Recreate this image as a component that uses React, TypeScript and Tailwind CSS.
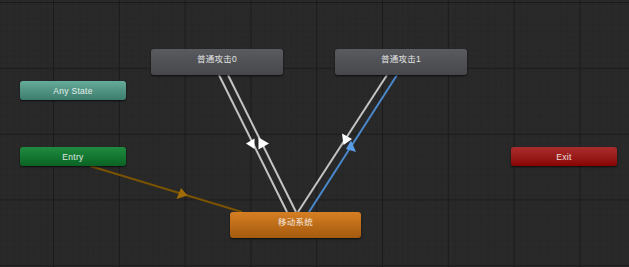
import React from 'react';

type NodeProps = {
  label: string;
  className: string;
};

function StateNode({ label, className }: NodeProps) {
  return (
    <div
      className={`absolute flex items-center justify-center rounded-[3px] text-[8.5px] leading-none tracking-[0.3px] text-white/85 shadow-[0_1px_2px_rgba(0,0,0,0.7)] ${className}`}
      style={{ fontFamily: '"Liberation Sans", "Noto Sans CJK SC", sans-serif' }}
    >
      {label}
    </div>
  );
}

export default function App() {
  return (
    <div className="relative h-[267px] w-[629px] overflow-hidden bg-[#292929]">
      {/* grid + transitions */}
      <svg className="absolute inset-0" width="629" height="267" viewBox="0 0 629 267">
        <defs>
          <pattern id="minor" x="53" y="2" width="6.58" height="6.58" patternUnits="userSpaceOnUse">
            <path d="M6.58 0 L0 0 L0 6.58" fill="none" stroke="#232323" strokeWidth="1" />
          </pattern>
          <pattern id="major" x="53" y="2" width="65.8" height="65.8" patternUnits="userSpaceOnUse">
            <rect width="65.8" height="65.8" fill="url(#minor)" />
            <path d="M65.8 0 L0 0 L0 65.8" fill="none" stroke="#1b1b1b" strokeWidth="2" />
          </pattern>
        </defs>
        <rect width="629" height="267" fill="url(#major)" />

        {/* entry -> move */}
        <line x1="90" y1="166" x2="242" y2="212" stroke="#7a5204" strokeWidth="2.2" />
        <polygon points="181,188 176.5,199 187.5,195.5" fill="#a06c08" />

        {/* attack0 <-> move */}
        <line x1="219" y1="75" x2="287" y2="212" stroke="#c4c4c4" strokeWidth="2" />
        <line x1="228" y1="75" x2="296" y2="212" stroke="#c4c4c4" strokeWidth="2" />
        <polygon points="246,143.5 254.5,138.5 254.5,149" fill="#ffffff" />
        <polygon points="258.5,137.5 258.5,149.5 269,143.5" fill="#ffffff" />

        {/* attack1 <-> move */}
        <line x1="387" y1="75" x2="298" y2="212" stroke="#c4c4c4" strokeWidth="2" />
        <line x1="397" y1="75" x2="309" y2="212" stroke="#4a88cc" strokeWidth="2" />
        <polygon points="342,133.5 343.5,145 352,139" fill="#ffffff" />
        <polygon points="351,140.5 346,149 356,152" fill="#5a9ee8" />
      </svg>

      <StateNode
        label="Any State"
        className="left-[20px] top-[81px] h-[19px] w-[106px] pt-[1px] bg-gradient-to-b from-[#66ac9b] to-[#3c7c6c]"
      />
      <StateNode
        label="Entry"
        className="left-[20px] top-[147px] h-[19px] w-[106px] pt-[1px] bg-gradient-to-b from-[#1f8c3f] to-[#0a6324]"
      />
      <StateNode
        label="Exit"
        className="left-[511px] top-[147px] h-[19px] w-[106px] pt-[1px] bg-gradient-to-b from-[#aa2c2c] to-[#880303]"
      />
      <StateNode
        label="普通攻击0"
        className="left-[151px] top-[49px] h-[26px] w-[132px] pb-[5px] bg-gradient-to-b from-[#595b5f] to-[#46484c]"
      />
      <StateNode
        label="普通攻击1"
        className="left-[335px] top-[49px] h-[26px] w-[132px] pb-[5px] bg-gradient-to-b from-[#595b5f] to-[#46484c]"
      />
      <StateNode
        label="移动系统"
        className="left-[230px] top-[212px] h-[26px] w-[131px] pb-[5px] bg-gradient-to-b from-[#d67f22] to-[#a55a0e]"
      />
    </div>
  );
}
